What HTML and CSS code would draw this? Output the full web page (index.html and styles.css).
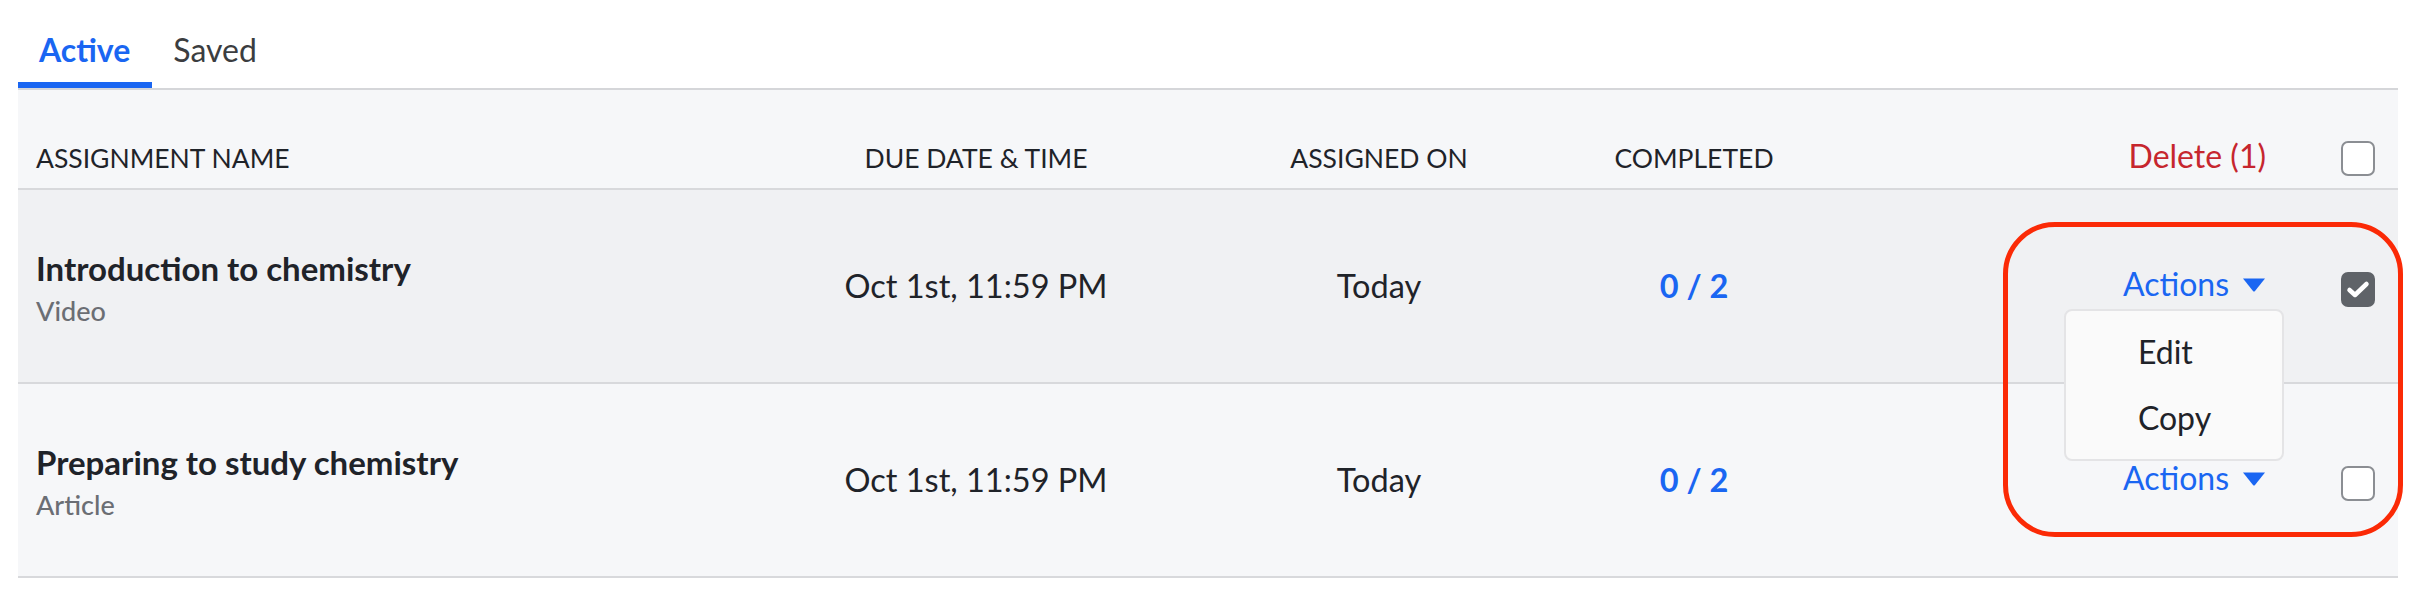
FILE: index.html
```html
<!DOCTYPE html>
<html lang="en">
<head>
<meta charset="utf-8">
<title>Assignments</title>
<link rel="stylesheet" href="styles.css">
</head>
<body>
<div class="page">
  <nav class="tabs">
    <a class="tab tab-active">Active</a>
    <a class="tab">Saved</a>
  </nav>
  <div class="table">
    <div class="row head">
      <div class="cell name">ASSIGNMENT NAME</div>
      <div class="cell center">DUE DATE &amp; TIME</div>
      <div class="cell center">ASSIGNED ON</div>
      <div class="cell center">COMPLETED</div>
      <div class="cell actions"><span class="delete">Delete (1)</span></div>
      <div class="cell box"><span class="checkbox"></span></div>
    </div>
    <div class="row selected">
      <div class="cell name">
        <div class="title">Introduction to chemistry</div>
        <div class="type">Video</div>
      </div>
      <div class="cell center data">Oct 1st, 11:59 PM</div>
      <div class="cell center data">Today</div>
      <div class="cell center data count">0 / 2</div>
      <div class="cell actions">
        <div class="action-wrap">
          <span class="action-btn">Actions<svg class="caret" width="24" height="14" viewBox="0 0 24 14"><path d="M1 0.5 H23 L12.8 13.2 Q12 14 11.2 13.2 Z" fill="#1a66f2"/></svg></span>
          <div class="menu">
            <div class="menu-item">Edit</div>
            <div class="menu-item">Copy</div>
          </div>
        </div>
      </div>
      <div class="cell box"><span class="checkbox checked"><svg width="34" height="34" viewBox="0 0 34 34"><path d="M8.5 18 L14 23 L25.5 12" fill="none" stroke="#fff" stroke-width="4.5" stroke-linecap="round" stroke-linejoin="round"/></svg></span></div>
    </div>
    <div class="row">
      <div class="cell name">
        <div class="title">Preparing to study chemistry</div>
        <div class="type">Article</div>
      </div>
      <div class="cell center data">Oct 1st, 11:59 PM</div>
      <div class="cell center data">Today</div>
      <div class="cell center data count">0 / 2</div>
      <div class="cell actions">
        <span class="action-btn">Actions<svg class="caret" width="24" height="14" viewBox="0 0 24 14"><path d="M1 0.5 H23 L12.8 13.2 Q12 14 11.2 13.2 Z" fill="#1a66f2"/></svg></span>
      </div>
      <div class="cell box"><span class="checkbox low"></span></div>
    </div>
    <div class="highlight"></div>
  </div>
</div>
</body>
</html>
```
FILE: styles.css
```css
* { box-sizing: border-box; }
html, body { margin: 0; padding: 0; background: #ffffff; }
body {
  font-family: Lato, "Open Sans", "Liberation Sans", sans-serif;
  color: #1f2329;
}
.page {
  margin: 0 24px 0 18px;
}
.tabs {
  display: flex;
  border-bottom: 2px solid #d5d6d9;
}
.tab {
  display: block;
  padding: 30px 22px 12px 21px;
  font-size: 32px;
  line-height: 40px;
  color: #3b3d40;
  border-bottom: 6px solid transparent;
}
.tab-active {
  color: #1a66f2;
  font-weight: 700;
  border-bottom-color: #1a66f2;
}
.table {
  position: relative;
}
.row {
  display: grid;
  grid-template-columns: 740px 400px 406px 224px 1fr 34px;
  padding: 0 23px 0 18px;
  height: 194px;
  border-bottom: 2px solid #d8d9dc;
  background: #f6f7f9;
  align-items: center;
}
.row.head {
  height: 100px;
  align-items: end;
  padding-bottom: 14px;
}
.row.selected {
  background: #f0f1f3;
}
.head .cell {
  font-size: 26.5px;
  line-height: 32px;
  color: #1f2329;
}
.cell.center { text-align: center; }
.cell.actions {
  text-align: right;
  padding-right: 75px;
  font-size: 32px;
}
.cell.box {
  display: flex;
  align-items: center;
  justify-content: center;
}
.head .cell.box { align-self: end; padding-bottom: 0; }
.head .cell.actions { font-size: 32px; }
.delete {
  font-size: 32px;
  line-height: 40px;
  color: #c6262e;
  position: relative;
  top: 2px;
}
.name { padding-top: 4px; }
.title {
  font-size: 33px;
  font-weight: 700;
  line-height: 46px;
  color: #1f2329;
}
.type {
  font-size: 27px;
  line-height: 40px;
  color: #6b6e74;
  font-weight: 500;
}
.data {
  font-size: 32.5px;
  line-height: 40px;
}
.count {
  color: #1a66f2;
  font-weight: 700;
}
.action-wrap {
  position: relative;
  display: inline-block;
}
.action-btn {
  display: inline-flex;
  align-items: center;
  gap: 13px;
  font-size: 32px;
  line-height: 40px;
  color: #1a66f2;
  position: relative;
  top: -2px;
}
.caret { display: block; margin-top: 2px; }
.checkbox {
  display: block;
  width: 34px;
  height: 35px;
  border: 2px solid #8b8e93;
  border-radius: 7px;
  background: #ffffff;
  position: relative;
  top: 2px;
}
.checkbox.checked {
  background: #5f6368;
  border-color: #5f6368;
  top: 3px;
}
.checkbox.checked svg { display: block; margin: -2px 0 0 -2px; }
.checkbox.low { top: 3px; }
.menu {
  position: absolute;
  z-index: 2;
  left: -59px;
  top: 43px;
  width: 220px;
  padding: 8px 0 8px 0;
  background: #fafafa;
  border: 2px solid #e4e4e6;
  border-radius: 8px;
  text-align: left;
}
.menu-item {
  font-size: 32px;
  line-height: 66px;
  padding-left: 72px;
  color: #1f2329;
}
.highlight {
  position: absolute;
  z-index: 3;
  left: 1985px;
  top: 132px;
  width: 400px;
  height: 315px;
  border: 5px solid #fb2a06;
  border-radius: 52px;
  pointer-events: none;
}
```
